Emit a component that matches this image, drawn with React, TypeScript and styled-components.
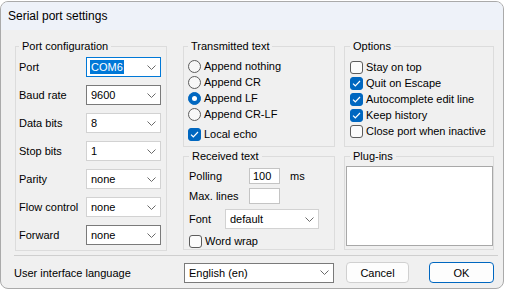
import React from "react";
import styled, { createGlobalStyle } from "styled-components";

const Global = createGlobalStyle`
  html, body { margin: 0; padding: 0; background: #ffffff; }
  body {
    font-family: "Liberation Sans", Arial, sans-serif;
    font-size: 11px;
    color: #000000;
  }
  * { box-sizing: border-box; }
`;

const Page = styled.div`
  padding-top: 1px;
`;

const Window = styled.div`
  width: 504px;
  height: 288px;
  border: 1px solid #aaaaaa;
  border-radius: 8px;
  overflow: hidden;
  background: #f0f0f0;
  display: flex;
  flex-direction: column;
`;

const TitleBar = styled.div`
  height: 28px;
  flex: none;
  background: #eef2f9;
  padding-left: 7px;
  display: flex;
  align-items: center;
  font-size: 12px;
  line-height: 16px;
`;

const Body = styled.div`
  flex: 1;
  padding: 8px 8px 0 14px;
  display: flex;
  flex-direction: column;
`;

const Columns = styled.div`
  display: flex;
  align-items: flex-start;
`;

const Column = styled.div<{ $width: number; $offset?: number }>`
  width: ${(p) => p.$width}px;
  margin-left: ${(p) => p.$offset ?? 0}px;
  display: flex;
  flex-direction: column;
  gap: 1px;
`;

const Group = styled.fieldset<{ $pad: string }>`
  margin: 0;
  min-width: 0;
  border: 1px solid #dcdcdc;
  padding: ${(p) => p.$pad};
`;

const Legend = styled.legend<{ $offset?: number }>`
  padding: 0 3px;
  line-height: 16px;
  margin-left: ${(p) => p.$offset ?? 0}px;
`;

const PortGrid = styled.div`
  display: grid;
  grid-template-columns: 67px 75px;
  row-gap: 8px;
  align-items: center;
`;

const FieldLabel = styled.span<{ $width?: number }>`
  line-height: 16px;
  white-space: nowrap;
  width: ${(p) => (p.$width ? `${p.$width}px` : "auto")};
  flex: none;
`;

type Tone = "light" | "dark" | "focus";

const borderFor = (t: Tone) =>
  t === "focus" ? "#0078d7" : t === "dark" ? "#7a7a7a" : "#d2d2d2";

const ComboBox = styled.div<{ $tone: Tone; $width: number }>`
  width: ${(p) => p.$width}px;
  height: 20px;
  background: #ffffff;
  border: 1px solid ${(p) => borderFor(p.$tone)};
  display: flex;
  align-items: center;
  justify-content: space-between;
  padding: 0 4px 0 4px;
  line-height: 14px;
  white-space: nowrap;
`;

const Selected = styled.span`
  background: #0078d7;
  color: #ffffff;
  margin-left: -1px;
  padding: 0 1px;
`;

const Chevron = () => (
  <svg width="9" height="5" viewBox="0 0 9 5">
    <polyline points="0.5,0.5 4.5,4.5 8.5,0.5" fill="none" stroke="#6a6a6a" strokeWidth="1" />
  </svg>
);

const Combo = ({
  value,
  width,
  tone = "light",
  selected = false,
}: {
  value: string;
  width: number;
  tone?: Tone;
  selected?: boolean;
}) => (
  <ComboBox $tone={tone} $width={width}>
    {selected ? <Selected>{value}</Selected> : <span>{value}</span>}
    <Chevron />
  </ComboBox>
);

const OptionList = styled.div`
  display: flex;
  flex-direction: column;
`;

const OptionRow = styled.div<{ $gapTop?: number }>`
  height: 16px;
  display: flex;
  align-items: center;
  gap: 3px;
  margin-top: ${(p) => p.$gapTop ?? 0}px;
  white-space: nowrap;
  line-height: 16px;
`;

const RadioCircle = styled.span<{ $on: boolean }>`
  width: 13px;
  height: 13px;
  border-radius: 50%;
  flex: none;
  display: flex;
  align-items: center;
  justify-content: center;
  background: ${(p) => (p.$on ? "#0067c0" : "#f7f7f7")};
  border: 1px solid ${(p) => (p.$on ? "#0067c0" : "#5c5c5c")};
  &::after {
    content: "";
    display: ${(p) => (p.$on ? "block" : "none")};
    width: 5px;
    height: 5px;
    border-radius: 50%;
    background: #ffffff;
  }
`;

const CheckBoxBox = styled.span<{ $on: boolean }>`
  width: 13px;
  height: 13px;
  border-radius: 3px;
  flex: none;
  display: flex;
  align-items: center;
  justify-content: center;
  background: ${(p) => (p.$on ? "#0067c0" : "#fbfbfb")};
  border: 1px solid ${(p) => (p.$on ? "#0067c0" : "#5c5c5c")};
`;

const Radio = ({ label, on = false }: { label: string; on?: boolean }) => (
  <OptionRow>
    <RadioCircle $on={on} />
    <span>{label}</span>
  </OptionRow>
);

const Check = ({ label, on = false, gapTop }: { label: string; on?: boolean; gapTop?: number }) => (
  <OptionRow $gapTop={gapTop}>
    <CheckBoxBox $on={on}>
      {on && (
        <svg width="9" height="7" viewBox="0 0 9 7">
          <polyline points="1,3.6 3.3,5.8 8,1" fill="none" stroke="#ffffff" strokeWidth="1.2" />
        </svg>
      )}
    </CheckBoxBox>
    <span>{label}</span>
  </OptionRow>
);

const FieldRow = styled.div<{ $gapTop?: number; $height?: number }>`
  display: flex;
  align-items: center;
  height: ${(p) => p.$height ?? 16}px;
  margin-top: ${(p) => p.$gapTop ?? 0}px;
`;

const TextInput = styled.div`
  width: 31px;
  height: 16px;
  background: #ffffff;
  border: 1px solid #c4c4c4;
  padding: 0 3px;
  line-height: 14px;
`;

const Unit = styled.span`
  margin-left: 10px;
  line-height: 16px;
`;

const ListBox = styled.div`
  height: 80px;
  background: #ffffff;
  border: 1px solid #a8a8a8;
`;

const Separator = styled.div`
  height: 1px;
  background: #cfcfcf;
  margin: 4px 0 0 -1px;
  width: 484px;
`;

const BottomRow = styled.div`
  display: flex;
  align-items: center;
  margin-top: 6px;
  margin-left: -1px;
  height: 21px;
`;

const Buttons = styled.div`
  display: flex;
  gap: 20px;
  margin-left: 12px;
`;

const Button = styled.button<{ $primary?: boolean; $width: number }>`
  width: ${(p) => p.$width}px;
  height: 21px;
  font: inherit;
  color: #000000;
  background: #fdfdfd;
  border: 1px solid ${(p) => (p.$primary ? "#0067c0" : "#d0d0d0")};
  border-radius: 4px;
  padding: 0;
  line-height: 16px;
`;

const portRows: { label: string; value: string; tone: Tone; selected?: boolean }[] = [
  { label: "Port", value: "COM6", tone: "focus", selected: true },
  { label: "Baud rate", value: "9600", tone: "dark" },
  { label: "Data bits", value: "8", tone: "light" },
  { label: "Stop bits", value: "1", tone: "light" },
  { label: "Parity", value: "none", tone: "light" },
  { label: "Flow control", value: "none", tone: "light" },
  { label: "Forward", value: "none", tone: "dark" },
];

export default function App() {
  return (
    <Page>
      <Global />
      <Window>
        <TitleBar>Serial port settings</TitleBar>
        <Body>
          <Columns>
            <Column $width={152}>
              <Group $pad="3px 5px 5px 3px">
                <Legend>Port configuration</Legend>
                <PortGrid>
                  {portRows.map((r) => (
                    <React.Fragment key={r.label}>
                      <FieldLabel>{r.label}</FieldLabel>
                      <Combo value={r.value} width={75} tone={r.tone} selected={r.selected} />
                    </React.Fragment>
                  ))}
                </PortGrid>
              </Group>
            </Column>
            <Column $width={152} $offset={16}>
              <Group $pad="4px 4px 4px 4px">
                <Legend>Transmitted text</Legend>
                <OptionList>
                  <Radio label="Append nothing" />
                  <Radio label="Append CR" />
                  <Radio label="Append LF" on />
                  <Radio label="Append CR-LF" />
                  <Check label="Local echo" on gapTop={4} />
                </OptionList>
              </Group>
              <Group $pad="4px 4px 0 5px">
                <Legend>Received text</Legend>
                <FieldRow>
                  <FieldLabel $width={60}>Polling</FieldLabel>
                  <TextInput>100</TextInput>
                  <Unit>ms</Unit>
                </FieldRow>
                <FieldRow $gapTop={4}>
                  <FieldLabel $width={60}>Max. lines</FieldLabel>
                  <TextInput />
                </FieldRow>
                <FieldRow $gapTop={5} $height={20}>
                  <FieldLabel $width={36}>Font</FieldLabel>
                  <Combo value="default" width={94} />
                </FieldRow>
                <OptionList>
                  <Check label="Word wrap" gapTop={4} />
                </OptionList>
              </Group>
            </Column>
            <Column $width={150} $offset={9}>
              <Group $pad="5px 4px 7px 5px">
                <Legend>Options</Legend>
                <OptionList>
                  <Check label="Stay on top" />
                  <Check label="Quit on Escape" on />
                  <Check label="Autocomplete edit line" on />
                  <Check label="Keep history" on />
                  <Check label="Close port when inactive" />
                </OptionList>
              </Group>
              <Group $pad="2px 0 3px 1px">
                <Legend $offset={4}>Plug-ins</Legend>
                <ListBox />
              </Group>
            </Column>
          </Columns>
          <Separator />
          <BottomRow>
            <FieldLabel $width={170}>User interface language</FieldLabel>
            <Combo value="English (en)" width={150} tone="dark" />
            <Buttons>
              <Button $width={63}>Cancel</Button>
              <Button $width={65} $primary>
                OK
              </Button>
            </Buttons>
          </BottomRow>
        </Body>
      </Window>
    </Page>
  );
}
